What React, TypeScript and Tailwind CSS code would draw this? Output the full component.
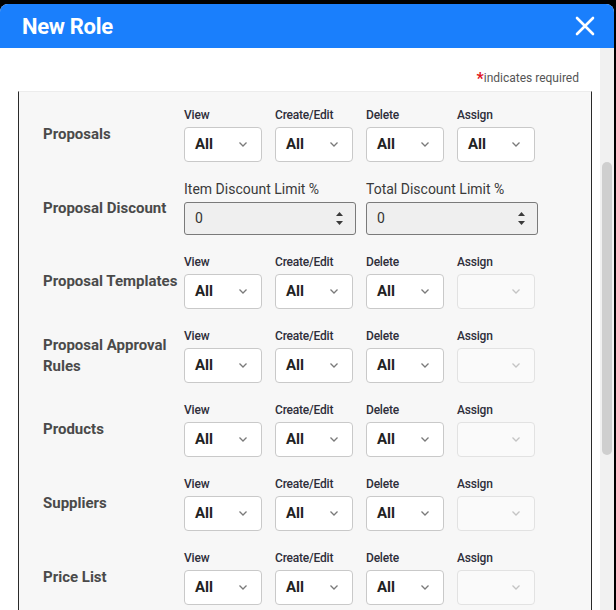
import React from "react";

type Perm = { label: string; assign: boolean };

const COLS = ["View", "Create/Edit", "Delete", "Assign"];

const ROWS: Perm[] = [
  { label: "Proposals", assign: true },
  { label: "Proposal Discount", assign: false },
  { label: "Proposal Templates", assign: false },
  { label: "Proposal Approval Rules", assign: false },
  { label: "Products", assign: false },
  { label: "Suppliers", assign: false },
  { label: "Price List", assign: false },
];

function Chevron({ disabled }: { disabled?: boolean }) {
  return (
    <svg width="10" height="7" viewBox="0 0 10 7" className="shrink-0">
      <path
        d="M1.5 1.5L5 5l3.5-3.5"
        fill="none"
        stroke={disabled ? "#c4c4c4" : "#7a7a7a"}
        strokeWidth="1.3"
      />
    </svg>
  );
}

function FakeSelect({ value, disabled }: { value?: string; disabled?: boolean }) {
  return (
    <div
      className={`flex h-[35px] w-[78px] items-center justify-between rounded-[4px] border pl-[10px] pr-[13px] ${
        disabled ? "border-[#e2e2e2] bg-[#fafafa]" : "border-[#c9c9c9] bg-white"
      }`}
    >
      <span className="text-[15px] font-bold text-[#222]">{value}</span>
      <Chevron disabled={disabled} />
    </div>
  );
}

function NumberField({ label }: { label: string }) {
  return (
    <div className="w-[172px]">
      <div className="mb-[5px] text-[14px] leading-[16px] text-[#3a3a3a]">{label}</div>
      <div className="flex h-[33px] items-center justify-between rounded-[3px] border border-[#7a7a7a] bg-[#efefef] pl-[10px] pr-[12px]">
        <span className="text-[14px] text-[#333]">0</span>
        <div className="flex flex-col items-center gap-[5px]">
          <svg width="7" height="4" viewBox="0 0 7 4">
            <path d="M0 4L3.5 0 7 4z" fill="#3a3a3a" />
          </svg>
          <svg width="7" height="4" viewBox="0 0 7 4">
            <path d="M0 0h7L3.5 4z" fill="#3a3a3a" />
          </svg>
        </div>
      </div>
    </div>
  );
}

function PermRow({ row }: { row: Perm }) {
  const isDiscount = row.label === "Proposal Discount";
  return (
    <div className="flex items-center">
      <div className="w-[141px] pr-[4px] text-[15px] font-bold leading-[21px] text-[#4a4a4a]">
        {row.label}
      </div>
      {isDiscount ? (
        <div className="flex gap-[10px]">
          <NumberField label="Item Discount Limit %" />
          <NumberField label="Total Discount Limit %" />
        </div>
      ) : (
        <div className="flex gap-[13px]">
          {COLS.map((c) => {
            const off = c === "Assign" && !row.assign;
            return (
              <div key={c} className="w-[78px]">
                <div className="mb-[4px] text-[12px] font-medium leading-[16px] tracking-[-0.2px] text-[#2e2e3a]">
                  {c}
                </div>
                <FakeSelect value={off ? undefined : "All"} disabled={off} />
              </div>
            );
          })}
        </div>
      )}
    </div>
  );
}

export default function App() {
  return (
    <div className="h-[610px] w-[616px] overflow-hidden bg-black pt-[4px] font-['Roboto',sans-serif]">
      <div className="flex h-[606px] w-[614px] flex-col overflow-hidden rounded-t-[8px] bg-white">
        <div className="flex h-[44px] shrink-0 items-center justify-between bg-[#1a7ffc] pl-[22px] pr-[19px]">
          <h1 className="text-[22px] font-bold tracking-[-0.3px] text-white">New Role</h1>
          <svg width="20" height="20" viewBox="0 0 20 20">
            <path d="M2 2l16 16M18 2L2 18" stroke="white" strokeWidth="2.6" strokeLinecap="round" />
          </svg>
        </div>

        <div className="flex min-h-0 flex-1">
          <div className="min-w-0 flex-1 pl-[18px] pr-[8px]">
            <div className="pr-[13px] pt-[21px] text-right text-[12px] leading-[16px] text-[#555]">
              <span className="relative top-[2px] text-[16px] font-bold leading-none text-[#e0141e]">*</span>
              indicates required
            </div>
            <div className="mt-[5px] h-[600px] border-x border-t border-x-[#2a2a2a] border-t-[#ececec] bg-[#f7f7f7] pl-[24px] pt-[15px]">
              <div className="flex flex-col gap-[19px]">
                {ROWS.map((r) => (
                  <PermRow key={r.label} row={r} />
                ))}
              </div>
            </div>
          </div>

          <div className="w-[14px] shrink-0 bg-[#f1f1f1] pl-[2px] pr-[2px] pt-[114px]">
            <div className="h-[293px] w-[10px] rounded-full bg-[#cfcfcf]" />
          </div>
        </div>
      </div>
    </div>
  );
}
